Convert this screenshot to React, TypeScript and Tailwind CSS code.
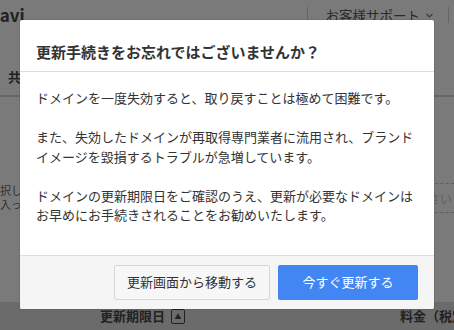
import React from 'react';

const font = { fontFamily: '"Noto Sans CJK JP", "Noto Sans", sans-serif' };

const RenewalModal = () => {
  return (
    <div className="absolute left-[20px] top-[20px] w-[414px] bg-white rounded-[2px] shadow-[0_0_0_1px_rgba(0,0,0,0.08)] overflow-hidden text-[#333]">
      <div className="px-4 pt-[21px] pb-[8px] border-b border-[#dedede]">
        <h2 className="text-[15px] leading-[22px] font-bold">更新手続きをお忘れではございませんか？</h2>
      </div>
      <div className="px-4 pt-[16px] pb-[30px] text-[13px] leading-[19.5px]">
        <p className="mb-[19.5px]">ドメインを一度失効すると、取り戻すことは極めて困難です。</p>
        <p className="mb-[19.5px]">
          また、失効したドメインが再取得専門業者に流用され、ブランドイメージを毀損するトラブルが急増しています。
        </p>
        <p>ドメインの更新期限日をご確認のうえ、更新が必要なドメインはお早めにお手続きされることをお勧めいたします。</p>
      </div>
      <div className="flex justify-end gap-2 px-4 pt-[9px] pb-[9px] bg-[#f5f5f5] border-t border-[#dedede]">
        <button
          type="button"
          className="w-[156px] h-[35px] rounded-[2px] border border-[#d6d6d6] bg-[#f7f7f7] text-[13px] text-[#333]"
        >
          更新画面から移動する
        </button>
        <button
          type="button"
          className="w-[140px] h-[35px] rounded-[2px] bg-[#4286f4] text-[13px] text-white"
        >
          今すぐ更新する
        </button>
      </div>
    </div>
  );
};

export default function App() {
  return (
    <div className="relative w-[454px] h-[330px] overflow-hidden bg-[#f4f4f4]" style={font}>
      {/* page behind the overlay */}
      <div className="flex flex-col h-full">
        <div className="h-[30px] flex items-center shrink-0">
          <span className="-ml-[13px] text-[17px] font-bold text-[#444]">Navi</span>
          <div className="flex-1" />
          <div className="w-px h-[16px] bg-[#c8c8c8]" />
          <span className="ml-[18px] text-[13.5px] text-[#555]">お客様サポート</span>
          <svg className="ml-[6px] mr-[15px] w-[7px] h-[5px] text-[#777]" viewBox="0 0 7 5" fill="none">
            <path d="M0.5 1l3 3 3-3" stroke="currentColor" strokeWidth="1.2" />
          </svg>
          <div className="w-px h-[16px] bg-[#c8c8c8] mr-[5px]" />
        </div>
        <div className="h-[67px] flex items-end pb-[9px] pl-[8px] border-b-2 border-[#cdcdcd] shrink-0">
          <span className="text-[13px] font-bold text-[#444]">共有</span>
        </div>
        <div className="flex-1 flex justify-between items-start pt-[86px]">
          <div className="text-[11px] leading-[14px] text-[#666]">
            <p>択しご</p>
            <p>入って</p>
          </div>
          <div className="w-[40px] h-[30px] border-t border-dashed border-b border-[#bbb] text-[12px] text-[#c4c4c4] pt-[6px] pl-[2px]">
            ださい
          </div>
        </div>
        <div className="h-[28px] bg-[#d6d6d6] flex items-center shrink-0">
          <span className="ml-[100px] text-[13px] font-bold text-[#444]">更新期限日</span>
          <span className="ml-[6px] w-[14px] h-[15px] border border-[#444] rounded-[2px] flex items-center justify-center text-[7px] text-[#444]">
            ▲
          </span>
          <div className="flex-1" />
          <span className="mr-[-24px] text-[13px] font-bold text-[#444]">料金（税別）</span>
        </div>
      </div>
      <div className="absolute inset-0 bg-black/50" />
      <RenewalModal />
    </div>
  );
}
